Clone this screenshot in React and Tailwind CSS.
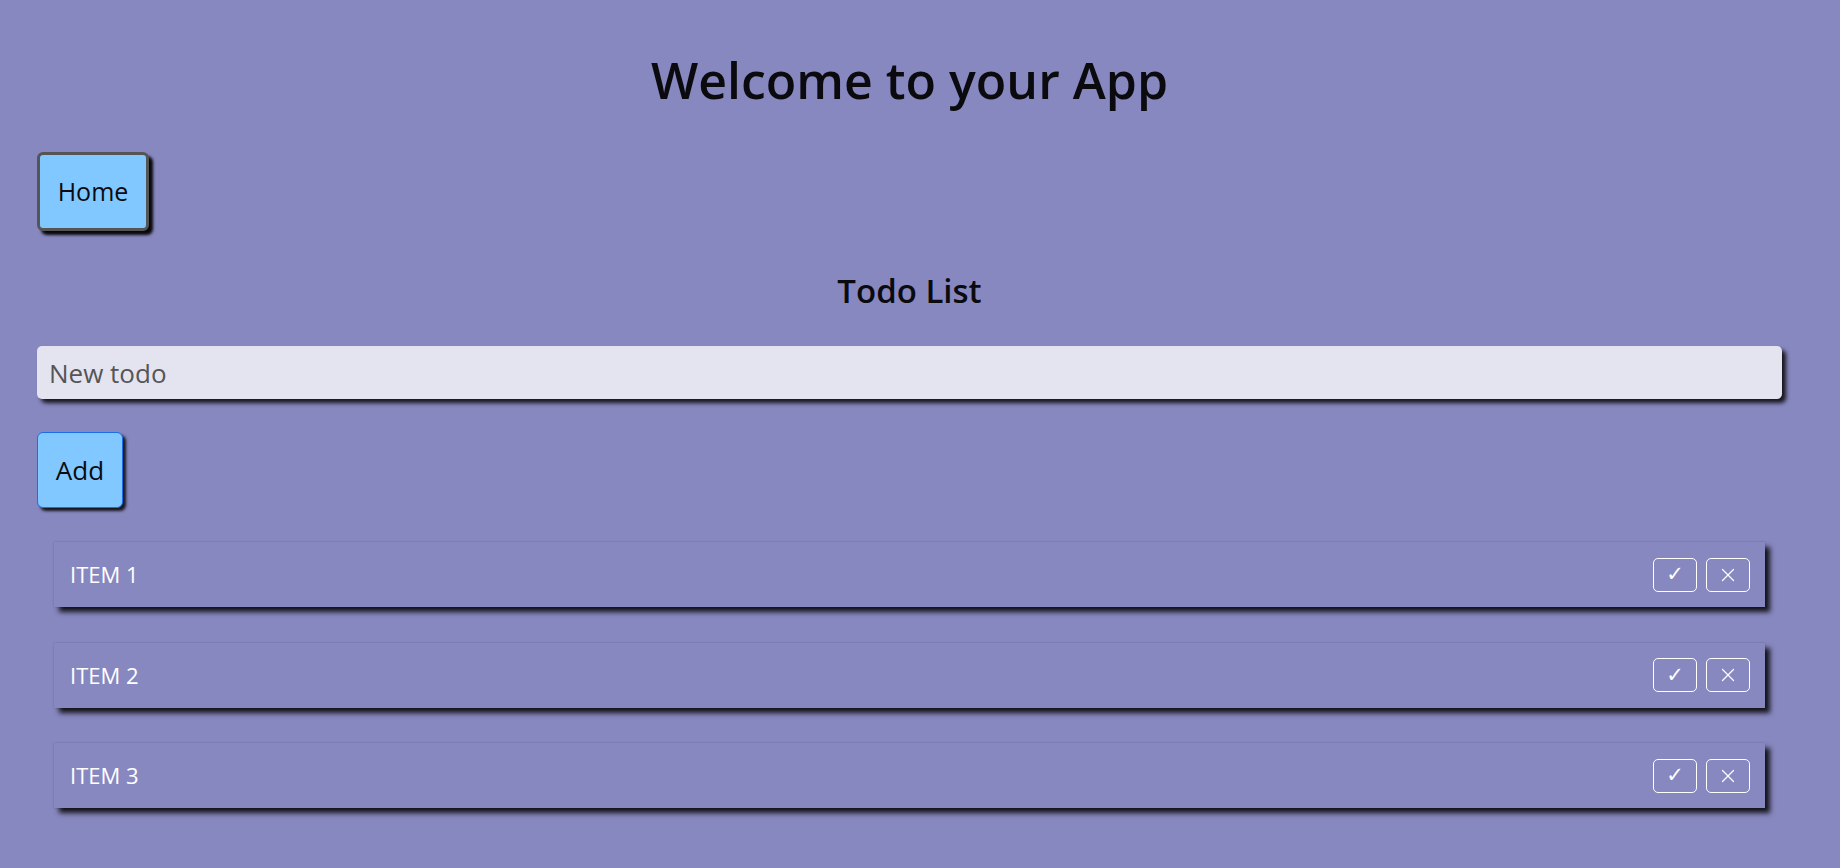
import React, { useState } from "react";
import { X } from "lucide-react";

const items = ["ITEM 1", "ITEM 2", "ITEM 3"];

const TodoItem = ({ label }) => (
  <li className="flex items-center justify-between h-[65px] pl-4 pr-[15px] bg-[#8888c0] shadow-[0_0_2px_rgba(0,0,0,0.2),5px_5px_5px_rgba(0,0,0,0.85)]">
    <span className="text-[22px] text-white">{label}</span>
    <div className="flex gap-[9px]">
      <button className="w-[44px] h-[34px] rounded-[5px] border border-white text-white text-[21px] leading-none flex items-center justify-center font-['DejaVu_Sans',sans-serif]">
        ✓
      </button>
      <button className="w-[44px] h-[34px] rounded-[5px] border border-white text-white flex items-center justify-center">
        <X size={22} strokeWidth={1.3} />
      </button>
    </div>
  </li>
);

const App = () => {
  const [todo, setTodo] = useState("");

  return (
    <div className="min-h-screen bg-[#8888c0] text-[#0b0b0f] font-['Open_Sans',sans-serif] pl-[37px] pt-[50px] pb-10">
      <div className="w-[1745px]">

        {/* HEADER */}
        <h1 className="text-center text-[50px] font-semibold leading-[60px]">Welcome to your App</h1>

        {/* NAV */}
        <button className="mt-[42px] w-[112px] h-[79px] rounded-[6px] border-[3px] border-[#555] bg-[#80c8ff] text-[25px] shadow-[4px_4px_3px_rgba(0,0,0,0.95)]">
          Home
        </button>

        {/* TODO */}
        <h2 className="mt-[40px] text-center text-[33px] font-semibold leading-[40px]">Todo List</h2>

        <input
          value={todo}
          onChange={(e) => setTodo(e.target.value)}
          placeholder="New todo"
          className="mt-[35px] block w-full h-[53px] rounded-[5px] bg-[#e4e4f0] px-3 text-[26px] placeholder:text-[#555] outline-none shadow-[4px_4px_4px_rgba(0,0,0,0.85)]"
        />

        <button className="mt-[33px] block w-[86px] h-[76px] rounded-[6px] border-[1.5px] border-[#1a6ee8] bg-[#80c8ff] text-[26px] shadow-[3px_3px_3px_rgba(0,0,0,0.85)]">
          Add
        </button>

        <ul className="mt-[34px] mx-[17px] flex flex-col gap-[35.5px]">
          {items.map((it) => (
            <TodoItem key={it} label={it} />
          ))}
        </ul>
      </div>
    </div>
  );
};

export default App;
